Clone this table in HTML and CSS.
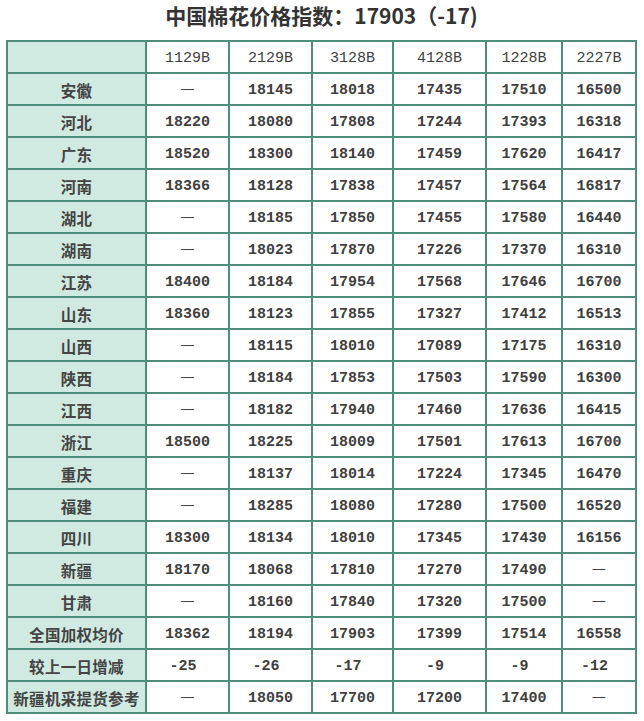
FILE: index.html
```html
<!DOCTYPE html>
<html lang="zh-CN">
<head>
<meta charset="utf-8">
<title>中国棉花价格指数</title>
<link rel="stylesheet" href="styles.css">
</head>
<body>
<div class="page">
  <h1 class="title">中国棉花价格指数：17903（-17)</h1>
  <table class="grid">
    <colgroup>
      <col class="c0"><col class="c1"><col class="c2"><col class="c3"><col class="c4"><col class="c5"><col class="c6">
    </colgroup>
    <thead>
      <tr><th class="label"></th><th>1129B</th><th>2129B</th><th>3128B</th><th>4128B</th><th>1228B</th><th>2227B</th></tr>
    </thead>
    <tbody>
      <tr><th class="label">安徽</th><td><span class="dash">—</span></td><td>18145</td><td>18018</td><td>17435</td><td>17510</td><td>16500</td></tr>
      <tr><th class="label">河北</th><td>18220</td><td>18080</td><td>17808</td><td>17244</td><td>17393</td><td>16318</td></tr>
      <tr><th class="label">广东</th><td>18520</td><td>18300</td><td>18140</td><td>17459</td><td>17620</td><td>16417</td></tr>
      <tr><th class="label">河南</th><td>18366</td><td>18128</td><td>17838</td><td>17457</td><td>17564</td><td>16817</td></tr>
      <tr><th class="label">湖北</th><td><span class="dash">—</span></td><td>18185</td><td>17850</td><td>17455</td><td>17580</td><td>16440</td></tr>
      <tr><th class="label">湖南</th><td><span class="dash">—</span></td><td>18023</td><td>17870</td><td>17226</td><td>17370</td><td>16310</td></tr>
      <tr><th class="label">江苏</th><td>18400</td><td>18184</td><td>17954</td><td>17568</td><td>17646</td><td>16700</td></tr>
      <tr><th class="label">山东</th><td>18360</td><td>18123</td><td>17855</td><td>17327</td><td>17412</td><td>16513</td></tr>
      <tr><th class="label">山西</th><td><span class="dash">—</span></td><td>18115</td><td>18010</td><td>17089</td><td>17175</td><td>16310</td></tr>
      <tr><th class="label">陕西</th><td><span class="dash">—</span></td><td>18184</td><td>17853</td><td>17503</td><td>17590</td><td>16300</td></tr>
      <tr><th class="label">江西</th><td><span class="dash">—</span></td><td>18182</td><td>17940</td><td>17460</td><td>17636</td><td>16415</td></tr>
      <tr><th class="label">浙江</th><td>18500</td><td>18225</td><td>18009</td><td>17501</td><td>17613</td><td>16700</td></tr>
      <tr><th class="label">重庆</th><td><span class="dash">—</span></td><td>18137</td><td>18014</td><td>17224</td><td>17345</td><td>16470</td></tr>
      <tr><th class="label">福建</th><td><span class="dash">—</span></td><td>18285</td><td>18080</td><td>17280</td><td>17500</td><td>16520</td></tr>
      <tr><th class="label">四川</th><td>18300</td><td>18134</td><td>18010</td><td>17345</td><td>17430</td><td>16156</td></tr>
      <tr><th class="label">新疆</th><td>18170</td><td>18068</td><td>17810</td><td>17270</td><td>17490</td><td><span class="dash">—</span></td></tr>
      <tr><th class="label">甘肃</th><td><span class="dash">—</span></td><td>18160</td><td>17840</td><td>17320</td><td>17500</td><td><span class="dash">—</span></td></tr>
      <tr><th class="label">全国加权均价</th><td>18362</td><td>18194</td><td>17903</td><td>17399</td><td>17514</td><td>16558</td></tr>
      <tr><th class="label">较上一日增减</th><td class="delta">-25</td><td class="delta">-26</td><td class="delta">-17</td><td class="delta">-9</td><td class="delta">-9</td><td class="delta">-12</td></tr>
      <tr><th class="label">新疆机采提货参考</th><td><span class="dash">—</span></td><td>18050</td><td>17700</td><td>17200</td><td>17400</td><td><span class="dash">—</span></td></tr>
    </tbody>
  </table>
</div>
</body>
</html>
```

FILE: styles.css
```css
html, body {
  margin: 0;
  padding: 0;
  background: #ffffff;
}

.page {
  padding: 0 6px;
  width: 631px;
}

.title {
  margin: 0;
  height: 40px;
  line-height: 30px;
  text-align: center;
  font-family: "Noto Sans CJK SC", "Noto Sans", sans-serif;
  font-size: 21px;
  font-weight: 700;
  color: #333333;
}

.grid {
  border-collapse: collapse;
  table-layout: fixed;
  width: 631px;
  font-family: "Liberation Mono", "Noto Sans CJK SC", monospace;
  font-size: 15px;
  color: #404040;
}

.c0 { width: 139px; }
.c1 { width: 83px; }
.c2 { width: 83px; }
.c3 { width: 81px; }
.c4 { width: 93px; }
.c5 { width: 76px; }
.c6 { width: 74px; }

.grid th,
.grid td {
  box-sizing: border-box;
  border: 2px solid #4e8c7b;
  height: 32px;
  padding: 0;
  text-align: center;
  vertical-align: middle;
}

.grid td {
  font-weight: 700;
  padding-top: 3px;
}

.grid thead th {
  font-weight: 400;
  padding-top: 3px;
}

.grid th.label {
  background: #d0e9e1;
  font-family: "Noto Sans CJK SC", sans-serif;
  font-weight: 700;
  font-size: 15.5px;
  color: #444444;
  letter-spacing: 0.3px;
  padding-top: 1px;
}

.grid td.delta {
  padding-right: 9px;
}

.dash {
  display: inline-block;
  font-family: "Noto Sans CJK SC", sans-serif;
  font-weight: 400;
  font-size: 16px;
  color: #444444;
  position: relative;
  top: -4px;
}
```
